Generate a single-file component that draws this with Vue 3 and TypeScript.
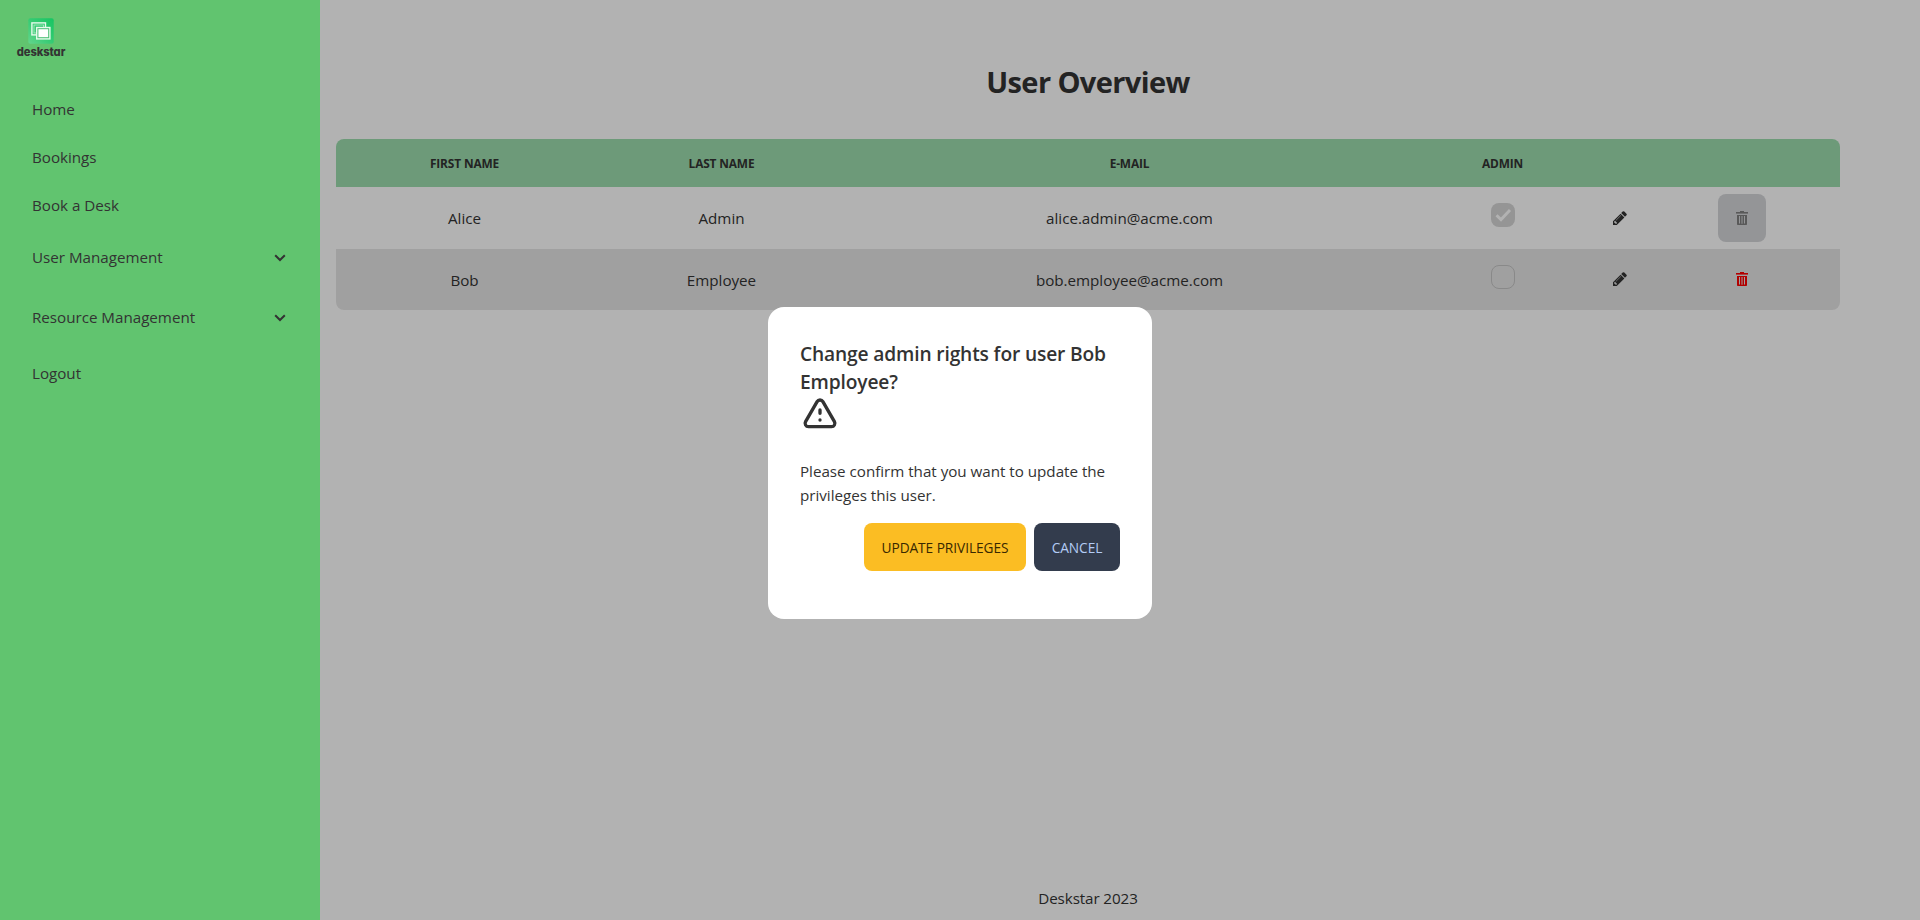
<script setup lang="ts">
interface NavItem {
  label: string
  kind: 'link' | 'group' | 'last'
}

interface User {
  firstName: string
  lastName: string
  email: string
  admin: boolean
}

const navItems: NavItem[] = [
  { label: 'Home', kind: 'link' },
  { label: 'Bookings', kind: 'link' },
  { label: 'Book a Desk', kind: 'link' },
  { label: 'User Management', kind: 'group' },
  { label: 'Resource Management', kind: 'group' },
  { label: 'Logout', kind: 'last' },
]

const users: User[] = [
  { firstName: 'Alice', lastName: 'Admin', email: 'alice.admin@acme.com', admin: true },
  { firstName: 'Bob', lastName: 'Employee', email: 'bob.employee@acme.com', admin: false },
]
</script>

<template>
  <div class="page">
    <aside class="sidebar">
      <div class="logo">
        <svg class="logo-mark" width="26" height="26" viewBox="0 0 26 26">
          <defs>
            <linearGradient id="tile" x1="0" y1="1" x2="1" y2="0">
              <stop offset="0" stop-color="#63d68d" />
              <stop offset="0.5" stop-color="#35cb73" />
              <stop offset="1" stop-color="#16c562" />
            </linearGradient>
          </defs>
          <rect x="0.3" y="0.3" width="25.4" height="25.4" rx="2" fill="url(#tile)" />
          <rect x="3.9" y="4.9" width="13.6" height="12" fill="none" stroke="#e6faec" stroke-width="1.4" />
          <rect x="6" y="7" width="9.6" height="8" fill="none" stroke="#b5ecc9" stroke-width="0.8" />
          <rect x="8" y="8.8" width="14.6" height="12.8" fill="#e6faec" />
          <rect x="9.9" y="10.7" width="10.8" height="9" fill="#fff" stroke="#49bf74" stroke-width="1" />
        </svg>
        <span class="logo-text">deskstar</span>
      </div>
      <nav class="nav">
        <a v-for="item in navItems" :key="item.label" class="nav-item" :class="item.kind">
          <span>{{ item.label }}</span>
          <svg v-if="item.kind === 'group'" class="chevron" width="12" height="8" viewBox="0 0 12 8">
            <path d="M1.2 1.2 6 6l4.8-4.8" fill="none" stroke="#333" stroke-width="2" />
          </svg>
        </a>
      </nav>
    </aside>

    <main class="content">
      <h1 class="title">User Overview</h1>
      <table class="users">
        <colgroup>
          <col class="c-name" />
          <col class="c-name" />
          <col class="c-mail" />
          <col class="c-admin" />
          <col class="c-edit" />
          <col class="c-delete" />
        </colgroup>
        <thead>
          <tr>
            <th>First Name</th>
            <th>Last Name</th>
            <th>E-Mail</th>
            <th>Admin</th>
            <th></th>
            <th></th>
          </tr>
        </thead>
        <tbody>
          <tr v-for="user in users" :key="user.email">
            <td>{{ user.firstName }}</td>
            <td>{{ user.lastName }}</td>
            <td>{{ user.email }}</td>
            <td>
              <span class="checkbox" :class="{ checked: user.admin }">
                <svg v-if="user.admin" width="24" height="24" viewBox="0 0 24 24">
                  <path d="M5.5 12.2 10 16.6 19 7" fill="none" stroke="#fff" stroke-width="2.9" />
                </svg>
              </span>
            </td>
            <td class="action">
              <span class="icon-button">
                <svg width="14" height="14" viewBox="128 128 1536 1536">
                  <path
                    fill="#333"
                    d="M491 1536l91-91-235-235-91 91v107h128v128h107zm523-928q0-22-22-22-10 0-17 7l-542 542q-7 7-7 17 0 22 22 22 10 0 17-7l542-542q7-7 7-17zm-54-192l416 416-832 832h-416v-416zm683 96q0 53-37 90l-166 166-416-416 166-165q36-38 90-38 53 0 91 38l235 234q37 39 37 91z"
                  />
                </svg>
              </span>
            </td>
            <td class="action">
              <span class="icon-button" :class="user.admin ? 'disabled' : 'danger'">
                <svg width="12" height="14" viewBox="0 0 12 14" fill="currentColor">
                  <path d="M4 0h4v1h4v1H0V1h4z" />
                  <path d="M0 2h12v1H0z" opacity="0.6" />
                  <path d="M5 5h2v7.5H5z" opacity="0.5" />
                  <path d="M1 4h10v1H1zM1 12.5h10v.7q0 .8-.8.8H1.8q-.8 0-.8-.8zM1 4h2v9H1zM4 4h1v9H4zM7 4h1v9H7zM9 4h2v9H9z" />
                </svg>
              </span>
            </td>
          </tr>
        </tbody>
      </table>
      <footer class="footer">Deskstar 2023</footer>
    </main>

    <div class="overlay">
      <section class="dialog" role="dialog">
        <h3 class="dialog-title">Change admin rights for user Bob Employee?</h3>
        <svg class="warning" width="40" height="40" viewBox="0 0 24 24">
          <path
            fill="none"
            stroke="#333"
            stroke-width="2"
            stroke-linecap="round"
            stroke-linejoin="round"
            d="M12 9v2m0 4h.01m-6.938 4h13.856c1.54 0 2.502-1.667 1.732-3L13.732 4c-.77-1.333-2.694-1.333-3.464 0L3.34 16c-.77 1.333.192 3 1.732 3z"
          />
        </svg>
        <p class="dialog-text">Please confirm that you want to update the privileges this user.</p>
        <div class="actions">
          <button class="btn update">Update Privileges</button>
          <button class="btn cancel">Cancel</button>
        </div>
      </section>
    </div>
  </div>
</template>

<style>
body {
  margin: 0;
  background: #fff;
}
</style>

<style scoped>
.page {
  position: relative;
  display: flex;
  height: 920px;
  overflow: hidden;
  color: #333;
  font-family: 'Open Sans', 'Noto Sans', sans-serif;
  font-size: 15.2px;
  line-height: 24px;
  letter-spacing: -0.02px;
}

.sidebar {
  position: relative;
  z-index: 2;
  box-sizing: border-box;
  width: 320px;
  flex: none;
  background: #61c46f;
}

.logo {
  display: flex;
  flex-direction: column;
  align-items: center;
  width: 50px;
  margin-left: 16px;
  padding-top: 18px;
}

.logo-mark {
  display: block;
}

.logo-text {
  margin-top: 1px;
  font-family: Inter, sans-serif;
  font-feature-settings: 'cv11';
  font-size: 11.2px;
  font-weight: 800;
  line-height: 14px;
  letter-spacing: -0.1px;
}

.nav {
  display: flex;
  flex-direction: column;
  padding-top: 26px;
}

.nav-item {
  display: flex;
  align-items: center;
  justify-content: space-between;
  box-sizing: border-box;
  height: 48px;
  padding: 0 34px 0 32px;
}

.nav-item.group {
  height: 60px;
  padding-bottom: 4px;
}

.nav-item.last {
  height: 48px;
}

.chevron {
  margin-top: 2px;
}

.content {
  display: flex;
  flex-direction: column;
  flex: 1;
  padding: 0 80px 0 16px;
}

.title {
  margin: 64px 0 0;
  font-size: 29px;
  font-weight: 700;
  line-height: 36px;
  letter-spacing: -0.6px;
  text-align: center;
}

.users {
  width: 1504px;
  margin-top: 39px;
  border-collapse: separate;
  border-spacing: 0;
  border-radius: 8px;
  table-layout: fixed;
  overflow: hidden;
  text-align: center;
}

.c-name {
  width: 257px;
}

.c-mail {
  width: 559px;
}

.c-admin {
  width: 187px;
}

.c-edit {
  width: 47px;
}

.c-delete {
  width: 197px;
}

.users th {
  height: 48px;
  padding: 0;
  background: #9cddae;
  font-size: 11.9px;
  font-weight: 700;
  line-height: 16px;
  letter-spacing: -0.15px;
  text-transform: uppercase;
}

.users td {
  box-sizing: border-box;
  height: 62px;
  padding: 0;
}

.users tr:nth-child(2) td {
  height: 61px;
  padding-top: 1px;
  background: #e6e6e6;
}

.users tr:nth-child(2) td.action {
  padding: 0 0 1px;
}

.checkbox {
  display: block;
  box-sizing: border-box;
  width: 24px;
  height: 24px;
  margin: 0 auto 6px;
  border: 1px solid #c4c4c4;
  border-radius: 8px;
}

.checkbox.checked {
  border: 0;
  background: #d6d6d6;
}

.checkbox svg {
  display: block;
}

.icon-button {
  display: flex;
  align-items: center;
  justify-content: center;
  width: 48px;
  height: 48px;
  margin: 0 auto;
  border-radius: 8px;
}

.icon-button.disabled {
  background: #d4d6d9;
  color: #808080;
}

.icon-button.danger {
  color: #f00;
}

.footer {
  margin-top: auto;
  padding-bottom: 10px;
  letter-spacing: -0.1px;
  text-align: center;
}

.overlay {
  position: absolute;
  inset: 0;
  display: flex;
  align-items: center;
  justify-content: center;
  box-sizing: border-box;
  padding-top: 6px;
  background: rgba(0, 0, 0, 0.3);
}

.dialog {
  box-sizing: border-box;
  width: 384px;
  height: 312px;
  padding: 33px 32px 31px;
  border-radius: 16px;
  background: #fff;
}

.dialog-title {
  margin: 0 0 -1px;
  font-size: 19.2px;
  font-weight: 600;
  line-height: 28px;
  letter-spacing: -0.15px;
}

.warning {
  display: block;
}

.dialog-text {
  margin: 24px 0 16px;
}

.actions {
  display: flex;
  justify-content: flex-end;
  gap: 8px;
}

.btn {
  height: 48px;
  padding: 0;
  border: 0;
  border-radius: 8px;
  font-family: inherit;
  font-size: 13.7px;
  font-weight: 500;
  letter-spacing: -0.05px;
  text-transform: uppercase;
}

.update {
  width: 162px;
  background: #fbbd23;
  color: #382800;
}

.cancel {
  width: 86px;
  background: #333c4d;
  color: #b3ccf5;
}
</style>
